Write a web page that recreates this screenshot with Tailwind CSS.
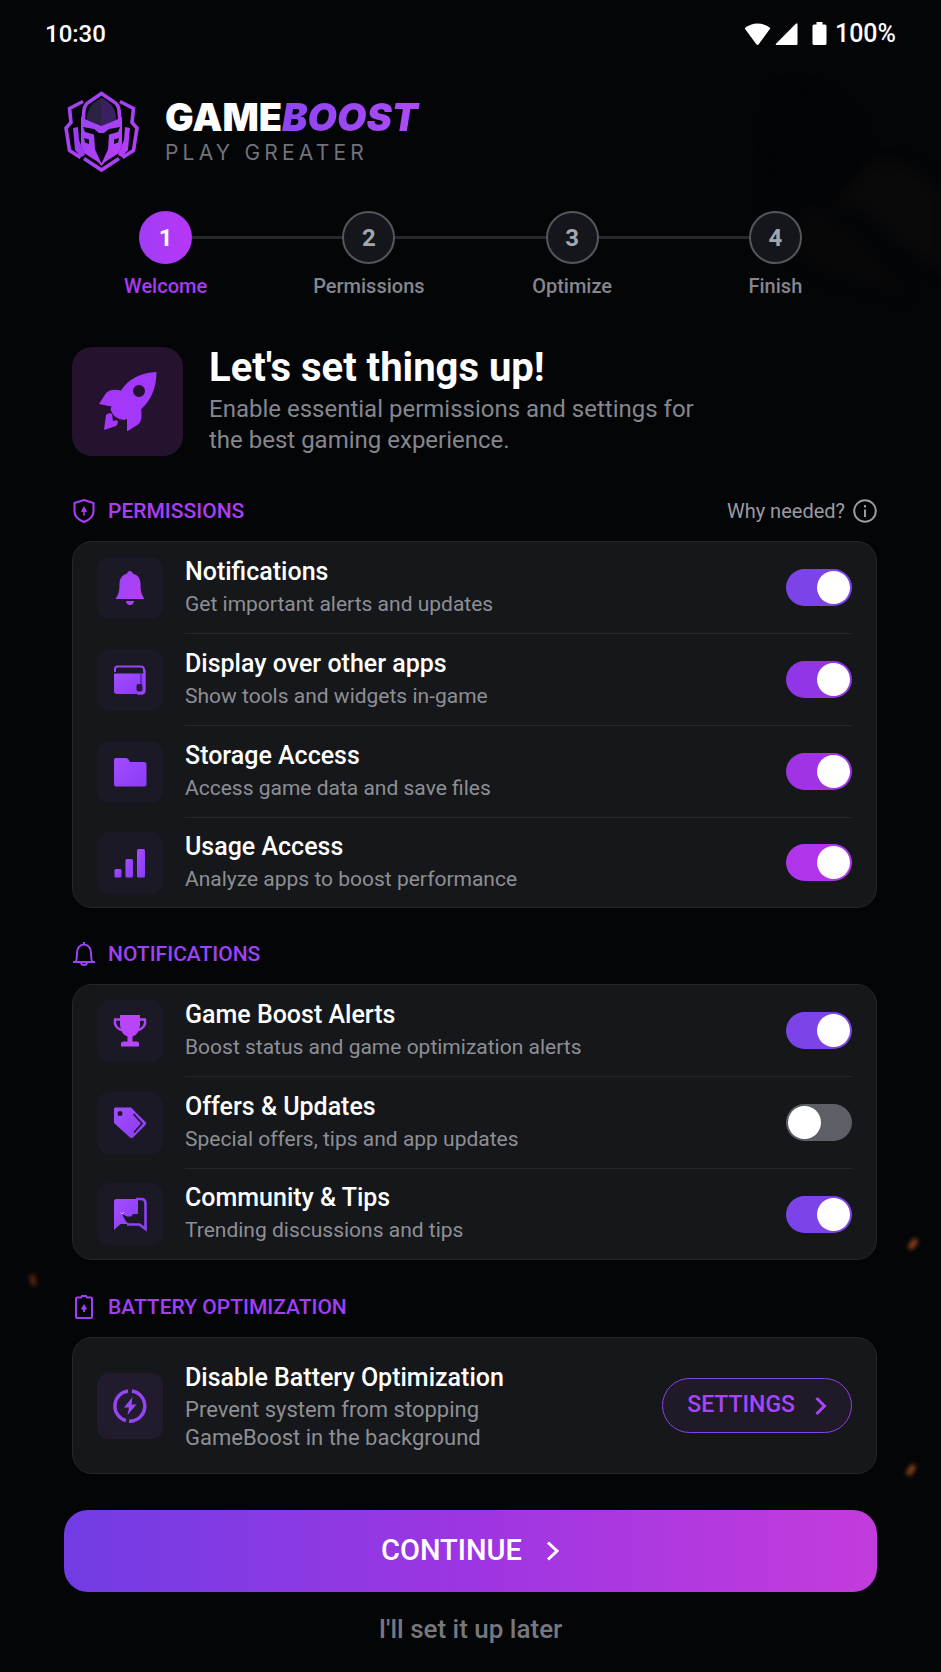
<!DOCTYPE html>
<html lang="en">
<head>
  <meta charset="UTF-8" />
  <meta name="viewport" content="width=device-width, initial-scale=1.0" />
  <title>GameBoost Setup</title>
  <script src="https://cdn.jsdelivr.net/npm/@tailwindcss/browser@4"></script>
</head>
<body class="relative min-h-screen overflow-x-hidden bg-[#040507] font-['Roboto','Noto_Sans',sans-serif] text-white">
  <!-- shared gradients -->
  <svg class="absolute size-0" aria-hidden="true">
    <defs>
      <linearGradient id="violet" x1="0" y1="0" x2="1" y2="1">
        <stop offset="0" stop-color="#a34dff" />
        <stop offset="1" stop-color="#8a3bf5" />
      </linearGradient>
      <linearGradient id="orchid" x1="0" y1="0" x2="1" y2="1">
        <stop offset="0" stop-color="#9a45f5" />
        <stop offset="1" stop-color="#b93df5" />
      </linearGradient>
      <linearGradient id="dome" x1="0" y1="0" x2="1" y2="0">
        <stop offset="0.5" stop-color="#2b2142" />
        <stop offset="0.5" stop-color="#3a2060" />
      </linearGradient>
    </defs>
  </svg>

  <!-- background art -->
  <svg class="pointer-events-none absolute right-0 top-[80px] h-[240px] w-[190px] blur-[6px]" viewBox="0 0 190 240" aria-hidden="true">
    <path d="M34 8C18 20 20 70 16 118h70c10-16 18-30 26-34C108 40 80 4 34 8z" fill="#030405" />
    <path d="M116 84c34-10 60 10 74 30v76c-26-10-44-30-58-44-14-14-34-20-52-24 16-8 26-26 36-38z" fill="#090909" />
    <path d="M52 124c40 10 80 60 104 90-40-10-90-20-110-40z" fill="#070708" />
  </svg>
  <span class="pointer-events-none absolute left-[30px] top-[1274px] h-3 w-1.5 -rotate-12 rounded-full bg-[#8a3312]/60 blur-[2px]"></span>
  <span class="pointer-events-none absolute right-[25px] top-[1238px] h-3 w-1.5 rotate-[35deg] rounded-full bg-[#a8501e]/80 blur-[2px]"></span>
  <span class="pointer-events-none absolute right-[27px] top-[1464px] h-3 w-1.5 rotate-[35deg] rounded-full bg-[#a8501e]/80 blur-[2px]"></span>

  <div class="relative">
    <!-- status bar -->
    <div class="flex h-[68px] items-center justify-between px-[45px] text-2xl font-medium">
      <span>10:30</span>
      <div class="flex items-center">
        <svg class="h-[22px] w-[27px]" viewBox="0 0 27 22" fill="#fff"><path d="M.6 5.3C8 -1.200 19 -1.200 26.400 5.300L14.700 21.200Q13.500 22.600 12.300 21.200z" /></svg>
        <svg class="ml-1 h-[22px] w-[23px]" viewBox="0 0 23 22" fill="#fff"><path d="M22.500 1.200V21q0 1-1 1H1.500Q0 22 1 20.800L20.800 .8Q22.500 -.4 22.500 1.200z" /></svg>
        <svg class="ml-3.5 h-[23px] w-[15px]" viewBox="0 0 15 23" fill="#fff"><path d="M4.500 0h6v2.500H13q1.500 0 1.500 1.500v17.500q0 1.500-1.500 1.500H2Q.5 23 .5 21.500V4Q.5 2.500 2 2.500h2.500z" /></svg>
        <span class="ml-2 text-[25px]">100%</span>
      </div>
    </div>

    <main class="px-16 pb-6">
      <!-- brand -->
      <header class="flex items-center gap-[26px] pt-[23px]">
        <svg class="h-[82px] w-[75px]" viewBox="0 0 75 82" aria-hidden="true">
          <g fill="none" stroke="url(#orchid)" stroke-width="3.600">
            <path d="M19 10.500L5.500 17.500 7 31.500 2 37 5.500 59.500 16.500 66.500" />
            <path d="M56 10.500L69.500 17.500 68 31.500 73 37 69.500 59.500 58.500 66.500" />
            <path d="M19 31L20 19Q21 13 25 11L37.500 2.500 50 11Q54 13 55 19L56 31" />
            <path d="M20 67.500L37.500 79 55 67.500" />
          </g>
          <path d="M9 37l5-1 1 13 6 15-4 2-6-7z" fill="#9a3df0" />
          <path d="M66 37l-5-1-1 13-6 15 4 2 6-7z" fill="#b23df5" />
          <path d="M23 31C22 19 27 12 37.500 6.500 48 12 53 19 52 31l-14.500 6z" fill="url(#dome)" />
          <path d="M17 26l8 4 12.500 5L50 30l8-4v28l-3 8-14 9-3.500 4-3.500-4-14-9-3-8z" fill="url(#orchid)" />
          <path d="M19 36l11 2 5 4h5l5-4 11-2-2 5-9 2.500-1 15-6.500 14-6.500-14-1-15L21 41z" fill="#09060f" />
          <path d="M20 47l5 1.500v4.500l-4-1.500zM55 47l-5 1.500v4.500l4-1.500z" fill="#09060f" />
        </svg>
        <div class="font-['Inter',sans-serif]">
          <h1 class="text-[38px]/10 font-black">GAME<span class="bg-linear-to-r from-[#8b45f2] to-[#b04af8] bg-clip-text pr-1 italic text-transparent">BOOST</span></h1>
          <p class="mt-0.5 text-[21px]/7 tracking-[0.2em] text-[#71727a]">PLAY GREATER</p>
        </div>
      </header>

      <!-- steps -->
      <ol class="mt-[38px] grid grid-cols-4 text-center text-xl/6 font-medium text-[#85868e]">
        <li class="relative flex flex-col items-center gap-2.5 text-[#a83af5]">
          <span class="absolute left-1/2 top-[25px] h-[3px] w-full bg-[#27282c]"></span>
          <span class="relative flex size-[53px] items-center justify-center rounded-full bg-linear-to-r from-[#a13cf5] to-[#b737f7] text-2xl font-bold text-white">1</span>
          Welcome
        </li>
        <li class="relative flex flex-col items-center gap-2.5">
          <span class="absolute left-1/2 top-[25px] h-[3px] w-full bg-[#27282c]"></span>
          <span class="relative flex size-[53px] items-center justify-center rounded-full border-2 border-[#55565c] bg-[#15161b] text-2xl font-bold text-[#a5a6ad]">2</span>
          Permissions
        </li>
        <li class="relative flex flex-col items-center gap-2.5">
          <span class="absolute left-1/2 top-[25px] h-[3px] w-full bg-[#27282c]"></span>
          <span class="relative flex size-[53px] items-center justify-center rounded-full border-2 border-[#55565c] bg-[#15161b] text-2xl font-bold text-[#a5a6ad]">3</span>
          Optimize
        </li>
        <li class="relative flex flex-col items-center gap-2.5">
          <span class="relative flex size-[53px] items-center justify-center rounded-full border-2 border-[#55565c] bg-[#15161b] text-2xl font-bold text-[#a5a6ad]">4</span>
          Finish
        </li>
      </ol>

      <!-- intro -->
      <section class="mt-12 ml-2 flex items-center gap-[26px]">
        <div class="flex h-[109px] w-[111px] shrink-0 items-center justify-center rounded-[20px] bg-[#24122f]">
          <svg class="size-[60px]" viewBox="0 0 60 60" fill="#a338fa">
            <path fill-rule="evenodd" d="M58.500 1C43 2 31 7 23 19.500Q13 17 8 22L1 33l12.500 2.500-1 3q3 9 13 10.500l3.500-1v12.500l11-7q5-4 3-15C53 29 58.500 17 58.500 1zM41 14a6 6 0 1 1 0 12 6 6 0 0 1 0-12z" />
            <path d="M14 43q-3-2-6 1L6 59l12-4q3-3 1-6l-4 1z" />
          </svg>
        </div>
        <div>
          <h2 class="text-[40px]/11 font-bold">Let's set things up!</h2>
          <p class="mt-1 max-w-[520px] text-2xl/[31px] text-[#85868e]">Enable essential permissions and settings for the best gaming experience.</p>
        </div>
      </section>

      <!-- permissions -->
      <section class="mt-[43px] ml-2">
        <div class="flex h-6 items-center justify-between">
          <h3 class="flex items-center gap-3 text-[21px]/6 font-medium text-[#ab3df7]">
            <svg class="size-6" viewBox="0 0 24 24" fill="none" stroke="currentColor" stroke-width="2"><path d="M12 1l9.500 3v8.500c0 5-4.500 8.500-9.500 10.500-5-2-9.500-5.500-9.500-10.500V4z" /><path d="M12 7l3 5.500-2.500 1 .5 3h-2l.5-3-2.500-1z" fill="currentColor" stroke="none" /></svg>
            PERMISSIONS
          </h3>
          <a href="#" class="flex items-center gap-2 text-xl/6 text-[#9a9ba1]">
            Why needed?
            <svg class="size-6" viewBox="0 0 24 24" fill="none" stroke="currentColor" stroke-width="2"><circle cx="12" cy="12" r="10.800" /><path d="M12 10.500V18M12 6v2.400" /></svg>
          </a>
        </div>
        <div class="mt-[18px] rounded-[20px] border border-[#25272b] bg-[#15171a] px-6">
          <div class="flex items-center gap-[22px]">
            <span class="flex h-[62px] w-[66px] shrink-0 items-center justify-center rounded-xl bg-[#1c1926]">
              <svg class="size-9" viewBox="0 0 36 36" fill="url(#orchid)"><path d="M18 1q2.500 0 2.800 2.600C26 5 28.500 9 28.500 14c0 8 1 10 4 15H3.500c3-5 4-7 4-15 0-5 2.500-9 7.700-10.400C15.500 1 18 1 18 1zM14 31h8q-.5 4-4 4t-4-4z" /></svg>
            </span>
            <div class="flex min-h-[92px] grow items-center justify-between border-b border-[#25272a]">
              <label for="perm-notifications"><span class="block text-[25px]/8 font-medium">Notifications</span><span class="block text-[21px]/8 text-[#8d8f95]">Get important alerts and updates</span></label>
              <input id="perm-notifications" type="checkbox" checked class="h-[37px] w-[66px] shrink-0 appearance-none rounded-full bg-[#5c5f66] p-[2px] before:block before:size-[33px] before:rounded-full before:bg-white checked:bg-[#7c44e8] checked:before:ml-[29px]" />
            </div>
          </div>
          <div class="flex items-center gap-[22px]">
            <span class="flex h-[62px] w-[66px] shrink-0 items-center justify-center rounded-xl bg-[#1c1926]">
              <svg class="size-9" viewBox="0 0 36 36"><path d="M3 10V7q0-2.500 2.500-2.500h23Q31.500 4.500 32 7v3" fill="none" stroke="#9a45f5" stroke-width="2" /><path d="M2 11.500h30v17.500q0 3-3 3H5q-3 0-3-3z" fill="url(#violet)" /><path d="M32.500 8v20q0 3.500-3 3.500h-4" fill="none" stroke="#9a45f5" stroke-width="2.400" /><path d="M29 12v11" stroke="#5a269c" stroke-width="1.500" /><rect x="24.500" y="22" width="6" height="7.500" rx="2" fill="#2a1748" /></svg>
            </span>
            <div class="flex min-h-[92px] grow items-center justify-between border-b border-[#25272a]">
              <label for="perm-overlay"><span class="block text-[25px]/8 font-medium">Display over other apps</span><span class="block text-[21px]/8 text-[#8d8f95]">Show tools and widgets in-game</span></label>
              <input id="perm-overlay" type="checkbox" checked class="h-[37px] w-[66px] shrink-0 appearance-none rounded-full bg-[#5c5f66] p-[2px] before:block before:size-[33px] before:rounded-full before:bg-white checked:bg-[#9036e6] checked:before:ml-[29px]" />
            </div>
          </div>
          <div class="flex items-center gap-[22px]">
            <span class="flex h-[62px] w-[66px] shrink-0 items-center justify-center rounded-xl bg-[#1c1926]">
              <svg class="size-9" viewBox="0 0 36 36" fill="url(#violet)"><path d="M2 6Q2 4 4 4h10q1.500 0 2.500 1.500L18 8h14q2.500 0 2.500 2.500v20q0 2-2 2H4q-2 0-2-2z" /></svg>
            </span>
            <div class="flex min-h-[92px] grow items-center justify-between border-b border-[#25272a]">
              <label for="perm-storage"><span class="block text-[25px]/8 font-medium">Storage Access</span><span class="block text-[21px]/8 text-[#8d8f95]">Access game data and save files</span></label>
              <input id="perm-storage" type="checkbox" checked class="h-[37px] w-[66px] shrink-0 appearance-none rounded-full bg-[#5c5f66] p-[2px] before:block before:size-[33px] before:rounded-full before:bg-white checked:bg-[#a034e5] checked:before:ml-[29px]" />
            </div>
          </div>
          <div class="flex items-center gap-[22px]">
            <span class="flex h-[62px] w-[66px] shrink-0 items-center justify-center rounded-xl bg-[#1c1926]">
              <svg class="size-9" viewBox="0 0 36 36" fill="url(#violet)"><rect x="2.500" y="24" width="7" height="8.500" rx="1.500" /><rect x="13.500" y="14" width="7.500" height="18.500" rx="1.500" /><rect x="25" y="4" width="8" height="28.500" rx="1.500" /></svg>
            </span>
            <div class="flex min-h-[89px] grow items-center justify-between">
              <label for="perm-usage"><span class="block text-[25px]/8 font-medium">Usage Access</span><span class="block text-[21px]/8 text-[#8d8f95]">Analyze apps to boost performance</span></label>
              <input id="perm-usage" type="checkbox" checked class="h-[37px] w-[66px] shrink-0 appearance-none rounded-full bg-[#5c5f66] p-[2px] before:block before:size-[33px] before:rounded-full before:bg-white checked:bg-[#b035ea] checked:before:ml-[29px]" />
            </div>
          </div>
        </div>
      </section>

      <!-- notifications -->
      <section class="mt-[34px] ml-2">
        <h3 class="flex items-center gap-3 text-[21px]/6 font-medium text-[#9c43f5]">
          <svg class="size-6" viewBox="0 0 24 24" fill="none" stroke="currentColor" stroke-width="2"><path d="M12 0v2M1 20h22M3.500 20C5 18 5 16 5 11c0-5 3-8.500 7-8.500s7 3.500 7 8.500c0 5 0 7 1.500 9M9 20.500q0 2.500 3 2.500t3-2.500" /></svg>
          NOTIFICATIONS
        </h3>
        <div class="mt-[18px] rounded-[20px] border border-[#25272b] bg-[#15171a] px-6">
          <div class="flex items-center gap-[22px]">
            <span class="flex h-[62px] w-[66px] shrink-0 items-center justify-center rounded-xl bg-[#1c1926]">
              <svg class="size-9" viewBox="0 0 36 36"><path d="M9 6.500H3Q1.500 15 11 17.500M27 6.500h6Q34.500 15 25 17.500" fill="none" stroke="#b145f5" stroke-width="2.400" /><path d="M8 2h20v10q-1 9.500-7.500 11.500v5h4q2.500 0 2.500 2.500v2.500H9V31q0-2.500 2.500-2.500h4v-5Q9 21.500 8 12z" fill="#b845fa" /></svg>
            </span>
            <div class="flex min-h-[92px] grow items-center justify-between border-b border-[#25272a]">
              <label for="notif-boost"><span class="block text-[25px]/8 font-medium">Game Boost Alerts</span><span class="block text-[21px]/8 text-[#8d8f95]">Boost status and game optimization alerts</span></label>
              <input id="notif-boost" type="checkbox" checked class="h-[37px] w-[66px] shrink-0 appearance-none rounded-full bg-[#5c5f66] p-[2px] before:block before:size-[33px] before:rounded-full before:bg-white checked:bg-[#7c44e8] checked:before:ml-[29px]" />
            </div>
          </div>
          <div class="flex items-center gap-[22px]">
            <span class="flex h-[62px] w-[66px] shrink-0 items-center justify-center rounded-xl bg-[#1c1926]">
              <svg class="size-9" viewBox="0 0 36 36"><path fill-rule="evenodd" d="M2 4Q2 2.500 3.500 2.500H19L33.500 17q1.500 1.500 0 3L21 32.500q-1.500 1.500-3 0L2 18zM8 6a2.500 2.500 0 1 0 0 5 2.500 2.500 0 0 0 0-5z" fill="url(#violet)" /><path d="M21.500 9l8.500 9.500-8 9" fill="none" stroke="#1c1926" stroke-width="1.600" /></svg>
            </span>
            <div class="flex min-h-[92px] grow items-center justify-between border-b border-[#25272a]">
              <label for="notif-offers"><span class="block text-[25px]/8 font-medium">Offers &amp; Updates</span><span class="block text-[21px]/8 text-[#8d8f95]">Special offers, tips and app updates</span></label>
              <input id="notif-offers" type="checkbox" class="h-[37px] w-[66px] shrink-0 appearance-none rounded-full bg-[#5c5f66] p-[2px] before:block before:size-[33px] before:rounded-full before:bg-white checked:bg-[#7c44e8] checked:before:ml-[29px]" />
            </div>
          </div>
          <div class="flex items-center gap-[22px]">
            <span class="flex h-[62px] w-[66px] shrink-0 items-center justify-center rounded-xl bg-[#1c1926]">
              <svg class="size-9" viewBox="0 0 36 36"><path d="M24 3h5q4.500 0 4.500 4.500V33l-6-4.500H15" fill="none" stroke="#8f42f5" stroke-width="2.600" /><path d="M2 5.500Q2 3 4.500 3H26v15h-5l-2 2.500h-4L10 18l4 7.500 3 2.500H8.500L2 34z" fill="url(#violet)" /><path d="M8.500 16.500l1.500 1.500 2-2" fill="none" stroke="#c9a6ff" stroke-width="1" /></svg>
            </span>
            <div class="flex min-h-[90px] grow items-center justify-between">
              <label for="notif-community"><span class="block text-[25px]/8 font-medium">Community &amp; Tips</span><span class="block text-[21px]/8 text-[#8d8f95]">Trending discussions and tips</span></label>
              <input id="notif-community" type="checkbox" checked class="h-[37px] w-[66px] shrink-0 appearance-none rounded-full bg-[#5c5f66] p-[2px] before:block before:size-[33px] before:rounded-full before:bg-white checked:bg-[#7c44e8] checked:before:ml-[29px]" />
            </div>
          </div>
        </div>
      </section>

      <!-- battery -->
      <section class="mt-[35px] ml-2">
        <h3 class="flex items-center gap-3 text-[21px]/6 font-medium text-[#a03ff5]">
          <svg class="size-6" viewBox="0 0 24 24" fill="none" stroke="currentColor" stroke-width="2"><path d="M9 2.500L10 1h4l1 1.500h4q1 0 1 1V22q0 1-1 1H5q-1 0-1-1V3.500q0-1 1-1z" /><path d="M12 9l3 5-2 1v2h-2v-2l-2-1z" fill="currentColor" stroke="none" /></svg>
          BATTERY OPTIMIZATION
        </h3>
        <div class="mt-[18px] flex min-h-[137px] items-center gap-[22px] rounded-[20px] border border-[#25272b] bg-[#15171a] px-6">
          <span class="flex size-[66px] shrink-0 items-center justify-center rounded-xl bg-[#221b2e]">
            <svg class="size-9" viewBox="0 0 36 36"><path d="M16 3A15.200 15.200 0 0 0 14 32.700M20 3A15.200 15.200 0 0 1 17 33.200" fill="none" stroke="#9645f5" stroke-width="3.400" /><path d="M20.500 9L12 19.500h5L15.500 27 24.500 16.500h-5z" fill="#9a48f5" /></svg>
          </span>
          <div class="grow">
            <h4 class="text-[25px]/9 font-medium">Disable Battery Optimization</h4>
            <p class="max-w-[320px] text-[22px]/7 text-[#8d8f95]">Prevent system from stopping GameBoost in the background</p>
          </div>
          <button type="button" class="flex h-[55px] shrink-0 items-center gap-5 rounded-full border border-[#8a42e8] bg-[#1f1928] px-6 text-[23px] font-medium text-[#a845f8]">
            SETTINGS
            <svg class="h-5 w-3" viewBox="0 0 12 20" fill="none" stroke="currentColor" stroke-width="3"><path d="M1.500 2l8 8-8 8" /></svg>
          </button>
        </div>
      </section>

      <button type="button" class="mt-9 flex h-[82px] w-full items-center justify-center gap-6 rounded-3xl bg-linear-to-r from-[#713ce4] via-[#9d35e2] to-[#c33bdc] text-[29px] font-medium">
        CONTINUE
        <svg class="h-5 w-3.5" viewBox="0 0 14 20" fill="none" stroke="currentColor" stroke-width="3"><path d="M2 1.500l9 8.500-9 8.500" /></svg>
      </button>
      <button type="button" class="mx-auto mt-[21px] block text-[26px]/8 font-medium text-[#77787f]">I'll set it up later</button>
    </main>
  </div>
</body>
</html>
